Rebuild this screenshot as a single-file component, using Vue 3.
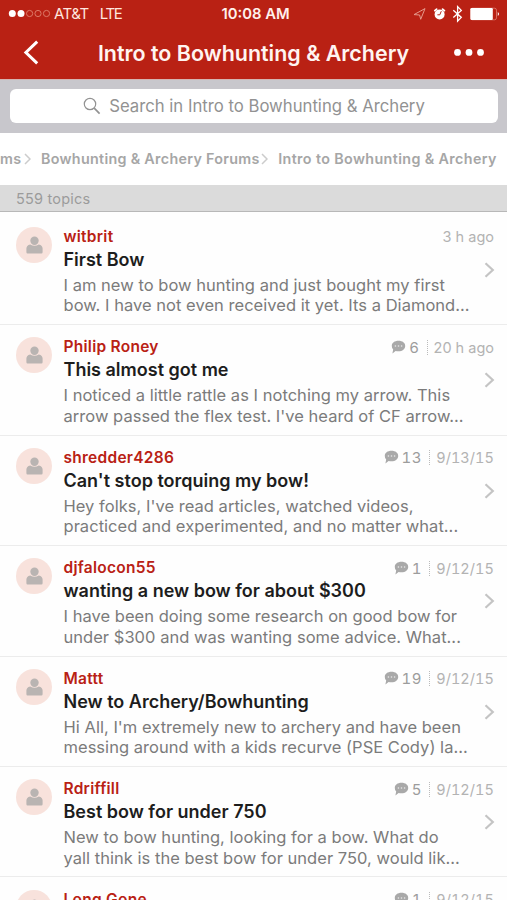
<script setup>
const topics = [
  { name: 'witbrit', title: 'First Bow', lines: ['I am new to bow hunting and just bought my first', 'bow. I have not even received it yet. Its a Diamond...'], count: null, time: '3 h ago' },
  { name: 'Philip Roney', title: 'This almost got me', lines: ['I noticed a little rattle as I notching my arrow. This', "arrow passed the flex test. I've heard of CF arrow..."], count: 6, time: '20 h ago' },
  { name: 'shredder4286', title: "Can't stop torquing my bow!", lines: ["Hey folks, I've read articles, watched videos,", 'practiced and experimented, and no matter what...'], count: 13, time: '9/13/15' },
  { name: 'djfalocon55', title: 'wanting a new bow for about $300', lines: ['I have been doing some research on good bow for', 'under $300 and was wanting some advice. What...'], count: 1, time: '9/12/15' },
  { name: 'Mattt', title: 'New to Archery/Bowhunting', lines: ["Hi All, I'm extremely new to archery and have been", 'messing around with a kids recurve (PSE Cody) la...'], count: 19, time: '9/12/15' },
  { name: 'Rdriffill', title: 'Best bow for under 750', lines: ['New to bow hunting, looking for a bow. What do', 'yall think is the best bow for under 750, would lik...'], count: 5, time: '9/12/15' },
  { name: 'Long Gone', title: '', lines: [], count: 1, time: '9/12/15' },
]
</script>

<template>
  <div class="screen">
    <header class="top">
      <div class="status">
        <div class="carrier">
          <svg class="signal" width="43" height="9" viewBox="0 0 43 9">
            <circle cx="4.3" cy="4.5" r="3.5" fill="#fff" />
            <circle cx="13" cy="4.5" r="3.5" fill="#fff" />
            <g fill="none" stroke="#dd7a68" stroke-width="1">
              <circle cx="21.6" cy="4.5" r="3.1" />
              <circle cx="30" cy="4.5" r="3.1" />
              <circle cx="38.5" cy="4.5" r="3.1" />
            </g>
          </svg>
          <span class="att">AT&amp;T</span><span class="lte">LTE</span>
        </div>
        <span class="clock">10:08 AM</span>
        <svg class="indicators" width="90" height="18" viewBox="0 0 90 18">
          <path d="M1 9.6 12 3.6 7.7 14.3 6.6 10Z" fill="none" stroke="#e69a8c" stroke-width="1" stroke-linejoin="round" />
          <circle cx="26.6" cy="9.4" r="5" fill="#fff" />
          <path d="M21.8 5.6 23.6 4.1M31.4 5.6 29.6 4.1" stroke="#fff" stroke-width="1.8" stroke-linecap="round" />
          <path d="M28.3 6.2 26.8 9.8H24.4" fill="none" stroke="#b92114" stroke-width="1" />
          <path d="M40.3 5.2 48.3 12.4 44.6 16.2V1.6L48.3 5.4 40.3 12.6" fill="none" stroke="#fff" stroke-width="1.3" />
          <rect x="57.5" y="3.2" width="26" height="11.6" rx="2" fill="none" stroke="#dd8073" stroke-width=".8" />
          <rect x="57.4" y="3" width="22.4" height="12" rx="1.2" fill="#fff" />
          <path d="M84.8 7Q87.2 9 84.8 11Z" fill="#fff" />
        </svg>
      </div>
      <div class="nav">
        <svg class="back" width="16" height="26" viewBox="0 0 16 26"><path d="M14.2 1.7 2.9 12.5 14.2 23.3" fill="none" stroke="#fff" stroke-width="3" /></svg>
        <h1>Intro to Bowhunting &amp; Archery</h1>
        <svg class="more" width="32" height="8" viewBox="0 0 32 8" fill="#fff"><circle cx="4.5" cy="3.4" r="3.4" /><circle cx="16" cy="3.4" r="3.4" /><circle cx="27.5" cy="3.4" r="3.4" /></svg>
      </div>
    </header>

    <div class="search">
      <div class="field">
        <svg width="18" height="18" viewBox="0 0 18 18" fill="none" stroke="#929292"><circle cx="7" cy="7" r="5.7" stroke-width="1.2" /><path d="M11.2 11.2 16.6 16.6" stroke-width="1.7" /></svg>
        <span>Search in Intro to Bowhunting &amp; Archery</span>
      </div>
    </div>

    <nav class="crumbs">
      <span class="c1">ms</span>
      <svg width="7" height="12" viewBox="0 0 7 12"><path d="M1 1 6 6 1 11" /></svg>
      <span class="c2">Bowhunting &amp; Archery Forums</span>
      <svg width="7" height="12" viewBox="0 0 7 12"><path d="M1 1 6 6 1 11" /></svg>
      <span class="c3">Intro to Bowhunting &amp; Archery</span>
    </nav>

    <div class="total"><span>559 topics</span></div>

    <main>
      <article v-for="t in topics" :key="t.name" class="topic">
        <div class="avatar">
          <svg width="17" height="18" viewBox="0 0 17 18" fill="#b9b4b2"><circle cx="8.5" cy="4.8" r="4.2" /><path d="M.4 17.4V12.6Q.4 9.2 4.2 8.4 8.5 11.2 12.8 8.4 16.6 9.2 16.6 12.6V16.2Q16.6 17.4 15.4 17.4H1.6Q.4 17.4.4 16.2Z" /></svg>
        </div>
        <div class="body">
          <div class="head">
            <span class="name">{{ t.name }}</span>
            <span class="meta">
              <template v-if="t.count !== null">
                <svg width="15" height="14" viewBox="0 0 15 14"><path d="M7.5.8C11.5.8 14.2 3 14.2 6S11.5 11.3 7.5 11.3Q5.8 11.3 4.6 10.9L1.4 13.4 2.2 9.6Q.8 8.2.8 6C.8 3 3.5.8 7.5.8Z" fill="#a9a9a9" /><g fill="#e8e8e8"><circle cx="4.4" cy="6" r=".8" /><circle cx="7.5" cy="6" r=".8" /><circle cx="10.6" cy="6" r=".8" /></g></svg>
                <span class="count">{{ t.count }}</span>
                <i class="divider"></i>
              </template>
              <span class="time" :class="{ date: t.time.includes('/') }">{{ t.time }}</span>
            </span>
          </div>
          <h2>{{ t.title }}</h2>
          <p v-for="line in t.lines" :key="line">{{ line }}</p>
        </div>
        <svg class="chevron" width="11" height="16" viewBox="0 0 11 16"><path d="M1.5 1.3 8.8 8 1.5 14.7" fill="none" stroke="#c4c4c4" stroke-width="2.2" /></svg>
      </article>
    </main>
  </div>
</template>

<style>
body { overflow: hidden; background: #fff; }
</style>

<style scoped>
.screen { width: 507px; height: 900px; overflow: hidden; background: #fefefe; font-family: Inter, Roboto, sans-serif; white-space: nowrap; }
h1, h2, p { margin: 0; }
svg { display: block; flex: none; }
.top { height: 79px; background: #b92114; color: #fff; }
.status { height: 27px; display: grid; grid-template-columns: 1fr auto 1fr; align-items: center; padding: 0 4px 0 8px; }
.carrier { display: flex; align-items: center; color: #ffe6df; }
.att { margin-left: 3px; font-size: 15px; letter-spacing: -.5px; }
.lte { margin-left: 11px; font-size: 15px; letter-spacing: -1.3px; }
.clock { font-size: 14.8px; font-weight: 600; color: #fff0ec; }
.indicators { justify-self: end; }
.nav { height: 52px; display: grid; grid-template-columns: 75px 1fr 75px; align-items: center; }
.back { margin-left: 23px; }
h1 { text-align: center; font-size: 21.45px; line-height: 52px; font-weight: 600; color: #fff4f1; }
.more { margin-left: 21px; }
.search { height: 54px; padding: 9px 9px 10px 10px; box-sizing: border-box; background: #c8c7cc; border-top: 1px solid #d5b4b1; }
.field { height: 34px; border-radius: 6px; background: #fff; display: flex; align-items: center; justify-content: center; gap: 8px; color: #929292; font-size: 16.72px; }
.crumbs { height: 52px; padding-bottom: 1px; box-sizing: border-box; display: flex; align-items: center; background: #fff; color: #a6a6a6; font-size: 14.3px; font-weight: 600; letter-spacing: .31px; }
.crumbs path { fill: none; stroke: #ccc; stroke-width: 1.5; }
.c1 { width: 22px; margin-right: 2px; }
.c2 { margin: 0 1px 0 10px; }
.c3 { margin-left: 10.5px; letter-spacing: .38px; }
.total { height: 27px; padding-left: 16px; box-sizing: border-box; border-bottom: 1px solid #b8b8b8; background: #dbdbdb; color: #9b9b9b; font-size: 14.5px; line-height: 27px; letter-spacing: .2px; }
main { padding-top: 2.8px; }
.topic { height: 110.45px; box-sizing: border-box; display: flex; border-bottom: 1px solid #ececec; padding: 12.2px 13px 0 16px; position: relative; }
.avatar { width: 36px; height: 36px; flex: none; border-radius: 50%; background: #f8e2dc; display: flex; align-items: center; justify-content: center; }
.body { flex: 1; margin-left: 11.5px; min-width: 0; }
.head { height: 20px; display: flex; justify-content: space-between; line-height: 19px; }
.name { color: #b92114; font-size: 15.5px; font-weight: 600; letter-spacing: .26px; }
.meta { display: flex; align-items: center; height: 20px; color: #b3b3b3; font-size: 14.5px; }
.meta svg { margin-top: -1px; }
.count { margin-left: 3px; color: #9c9c9c; font-size: 15px; letter-spacing: .6px; font-feature-settings: "tnum"; }
.date { font-feature-settings: "tnum"; letter-spacing: .05px; }
.divider { width: 0; height: 15px; margin: 0 6px 0 7px; border-left: 1px dotted #bbb; }
h2 { height: 28px; line-height: 26px; font-size: 18px; font-weight: 600; color: #1d1d1d; }
p { height: 20.5px; line-height: 20.5px; font-size: 16.5px; letter-spacing: .03px; color: #7b7b7b; }
.chevron { position: absolute; right: 12px; top: 47.2px; }
</style>
